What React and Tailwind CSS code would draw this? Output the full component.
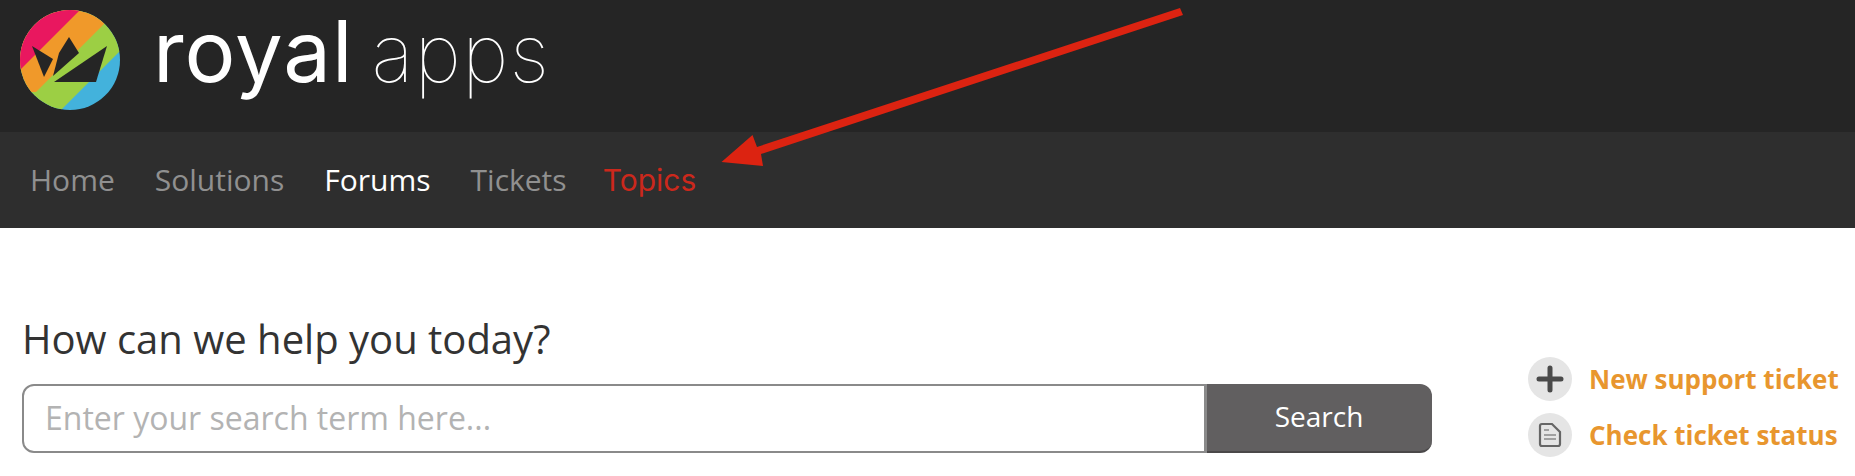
const font = { fontFamily: '"Open Sans", "Noto Sans", sans-serif' };

function Logo() {
  return (
    <svg width="140" height="132" viewBox="0 0 140 132" className="block shrink-0">
      <defs>
        <clipPath id="logo-circle">
          <circle cx="70" cy="60" r="50" />
        </clipPath>
      </defs>
      <g clipPath="url(#logo-circle)">
        <rect x="0" y="0" width="140" height="132" fill="#43b2dc" />
        <polygon points="125,46 55,116 0,116 0,0 125,0" fill="#9ccf44" />
        <polygon points="105,23 36,92 0,92 0,0 105,0" fill="#f0992a" />
        <polygon points="81,9 19,71 0,71 0,0 81,0" fill="#e9175f" />
      </g>
      <polygon points="32,46 53,59 44,77" fill="#252525" />
      <polygon points="69,37 79,53 53,76 59,53" fill="#252525" />
      <polygon points="107,46 96,82 54,82" fill="#252525" />
    </svg>
  );
}

function NavItem({ children, className, style }) {
  return <a className={`text-[30px] leading-none ${className}`} style={style}>{children}</a>;
}

export default function App() {
  return (
    <div className="relative w-[1855px] h-[476px] overflow-hidden bg-white" style={font}>
      <header className="h-[132px] bg-[#252525] flex items-start">
        <Logo />
        <div className="ml-[13px] flex items-baseline text-white text-[85px] leading-[104px]" style={{ fontFamily: 'Inter, sans-serif' }}>
          <span className="font-normal tracking-[1px]">royal</span>
          <span className="ml-[18px] font-thin text-[80px] tracking-[1px]">apps</span>
        </div>
      </header>
      <nav className="h-[96px] bg-[#2e2e2e] flex items-center gap-[40px] pl-[30px] pb-[1px]">
        <NavItem className="text-[#909090]">Home</NavItem>
        <NavItem className="text-[#909090]">Solutions</NavItem>
        <NavItem className="text-white">Forums</NavItem>
        <NavItem className="text-[#909090]">Tickets</NavItem>
        <NavItem className="text-[#cb281c] -ml-[4px]" style={{ fontFamily: 'Inter, sans-serif' }}>Topics</NavItem>
      </nav>
      <main className="flex items-end pl-[22px] pt-[87px]">
        <div className="w-[1410px]">
          <h1 className="text-[40px] leading-[48px] text-[#333333] font-normal">How can we help you today?</h1>
          <div className="mt-[21px] flex h-[69px]">
            <div className="flex-1 flex items-center border-2 border-r-3 border-[#8a8a8a] rounded-l-[12px] pl-[21px] pb-[2px] text-[32px] text-[#b3b3b3]">
              Enter your search term here...
            </div>
            <button className="w-[225px] bg-[#615f60] border-b-2 border-[#4a4849] rounded-r-[12px] pb-[3px] pr-[1px] text-white text-[28px]">Search</button>
          </div>
        </div>
        <div className="ml-[96px] flex flex-col gap-[12px] -mb-[4px]">
          <div className="flex items-center gap-[17px]">
            <span className="w-[44px] h-[44px] rounded-full bg-[#e5e5e5] flex items-center justify-center">
              <svg width="28" height="28" viewBox="0 0 28 28" className="blur-[0.6px]"><path d="M14 3v22M3 14h22" stroke="#4a4a4a" strokeWidth="5" strokeLinecap="round" /></svg>
            </span>
            <a className="text-[26px] font-bold text-[#e8962e] leading-none">New support ticket</a>
          </div>
          <div className="flex items-center gap-[17px]">
            <span className="w-[44px] h-[44px] rounded-full bg-[#e5e5e5] flex items-center justify-center">
              <svg width="28" height="28" viewBox="0 0 28 28" fill="none" stroke="#666666" strokeWidth="2.2" className="blur-[0.5px]">
                <path d="M4 5a2 2 0 0 1 2-2h10l8 8v12a2 2 0 0 1-2 2H6a2 2 0 0 1-2-2z" />
                <path d="M8 9h5M8 14h12M8 18h12" stroke="#a0a0a0" />
              </svg>
            </span>
            <a className="text-[26px] font-bold text-[#e8962e] leading-none">Check ticket status</a>
          </div>
        </div>
      </main>
      <svg className="absolute left-0 top-0 pointer-events-none" width="1855" height="476" viewBox="0 0 1855 476">
        <polygon points="1180,8 1183,15 761,154 763,166 721.5,162 752.5,135 757,147" fill="#dc2311" />
      </svg>
    </div>
  );
}
